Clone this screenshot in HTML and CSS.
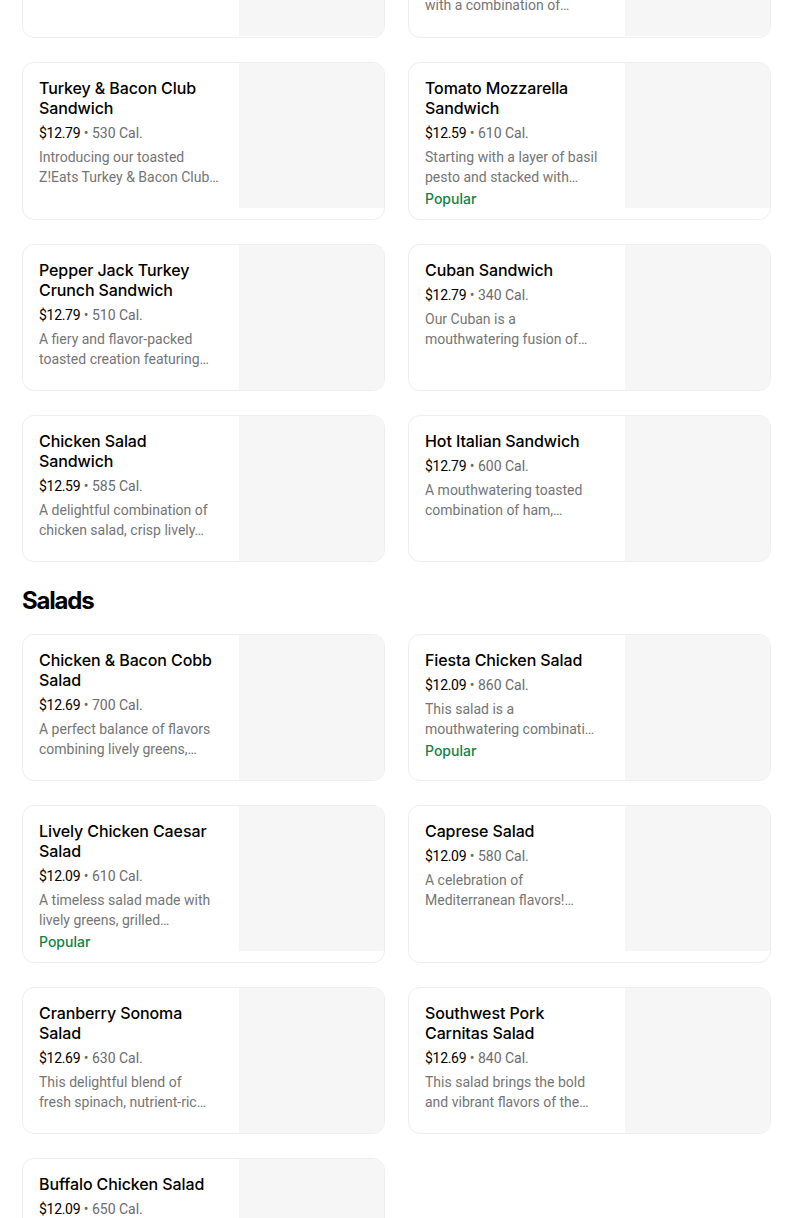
FILE: index.html
```html
<!DOCTYPE html>
<html lang="en">
<head>
<meta charset="utf-8">
<title>Menu</title>
<link rel="stylesheet" href="styles.css">
</head>
<body>
<main class="menu">
  <section class="section">
    <div class="grid grid--cut">
      <article class="card card--cut">
        <div class="card-body">
          <h3 class="card-title">Ham &amp; Swiss Sandwich</h3>
          <p class="card-meta"><span class="price">$12.59</span> • 520 Cal.</p>
          <p class="card-desc"><span class="line">A classic toasted favorite</span><span class="line">layered with smoked ham…</span></p>
        </div>
        <div class="card-media"></div>
      </article>
      <article class="card card--cut">
        <div class="card-body">
          <h3 class="card-title">Italian Meatball<br>Sandwich</h3>
          <p class="card-meta"><span class="price">$12.79</span> • 720 Cal.</p>
          <p class="card-desc"><span class="line">Our toasted sandwich made</span><span class="line">with a combination of…</span></p>
        </div>
        <div class="card-media"></div>
      </article>

      <article class="card">
        <div class="card-body">
          <h3 class="card-title">Turkey &amp; Bacon Club<br>Sandwich</h3>
          <p class="card-meta"><span class="price">$12.79</span> • 530 Cal.</p>
          <p class="card-desc"><span class="line">Introducing our toasted</span><span class="line">Z!Eats Turkey &amp; Bacon Club…</span></p>
        </div>
        <div class="card-media"></div>
      </article>
      <article class="card">
        <div class="card-body">
          <h3 class="card-title">Tomato Mozzarella<br>Sandwich</h3>
          <p class="card-meta"><span class="price">$12.59</span> • 610 Cal.</p>
          <p class="card-desc"><span class="line">Starting with a layer of basil</span><span class="line">pesto and stacked with…</span></p>
          <p class="card-tag">Popular</p>
        </div>
        <div class="card-media"></div>
      </article>

      <article class="card">
        <div class="card-body">
          <h3 class="card-title">Pepper Jack Turkey<br>Crunch Sandwich</h3>
          <p class="card-meta"><span class="price">$12.79</span> • 510 Cal.</p>
          <p class="card-desc"><span class="line">A fiery and flavor-packed</span><span class="line">toasted creation featuring…</span></p>
        </div>
        <div class="card-media"></div>
      </article>
      <article class="card">
        <div class="card-body">
          <h3 class="card-title">Cuban Sandwich</h3>
          <p class="card-meta"><span class="price">$12.79</span> • 340 Cal.</p>
          <p class="card-desc"><span class="line">Our Cuban is a</span><span class="line">mouthwatering fusion of…</span></p>
        </div>
        <div class="card-media"></div>
      </article>

      <article class="card">
        <div class="card-body">
          <h3 class="card-title">Chicken Salad<br>Sandwich</h3>
          <p class="card-meta"><span class="price">$12.59</span> • 585 Cal.</p>
          <p class="card-desc"><span class="line">A delightful combination of</span><span class="line">chicken salad, crisp lively…</span></p>
        </div>
        <div class="card-media"></div>
      </article>
      <article class="card">
        <div class="card-body">
          <h3 class="card-title">Hot Italian Sandwich</h3>
          <p class="card-meta"><span class="price">$12.79</span> • 600 Cal.</p>
          <p class="card-desc"><span class="line">A mouthwatering toasted</span><span class="line">combination of ham,…</span></p>
        </div>
        <div class="card-media"></div>
      </article>
    </div>
  </section>

  <section class="section">
    <h2 class="section-title">Salads</h2>
    <div class="grid">
      <article class="card">
        <div class="card-body">
          <h3 class="card-title">Chicken &amp; Bacon Cobb<br>Salad</h3>
          <p class="card-meta"><span class="price">$12.69</span> • 700 Cal.</p>
          <p class="card-desc"><span class="line">A perfect balance of flavors</span><span class="line">combining lively greens,…</span></p>
        </div>
        <div class="card-media"></div>
      </article>
      <article class="card">
        <div class="card-body">
          <h3 class="card-title">Fiesta Chicken Salad</h3>
          <p class="card-meta"><span class="price">$12.09</span> • 860 Cal.</p>
          <p class="card-desc"><span class="line">This salad is a</span><span class="line">mouthwatering combinati…</span></p>
          <p class="card-tag">Popular</p>
        </div>
        <div class="card-media"></div>
      </article>

      <article class="card">
        <div class="card-body">
          <h3 class="card-title">Lively Chicken Caesar<br>Salad</h3>
          <p class="card-meta"><span class="price">$12.09</span> • 610 Cal.</p>
          <p class="card-desc"><span class="line">A timeless salad made with</span><span class="line">lively greens, grilled…</span></p>
          <p class="card-tag">Popular</p>
        </div>
        <div class="card-media"></div>
      </article>
      <article class="card">
        <div class="card-body">
          <h3 class="card-title">Caprese Salad</h3>
          <p class="card-meta"><span class="price">$12.09</span> • 580 Cal.</p>
          <p class="card-desc"><span class="line">A celebration of</span><span class="line">Mediterranean flavors!…</span></p>
        </div>
        <div class="card-media"></div>
      </article>

      <article class="card">
        <div class="card-body">
          <h3 class="card-title">Cranberry Sonoma<br>Salad</h3>
          <p class="card-meta"><span class="price">$12.69</span> • 630 Cal.</p>
          <p class="card-desc"><span class="line">This delightful blend of</span><span class="line">fresh spinach, nutrient-ric…</span></p>
        </div>
        <div class="card-media"></div>
      </article>
      <article class="card">
        <div class="card-body">
          <h3 class="card-title">Southwest Pork<br>Carnitas Salad</h3>
          <p class="card-meta"><span class="price">$12.69</span> • 840 Cal.</p>
          <p class="card-desc"><span class="line">This salad brings the bold</span><span class="line">and vibrant flavors of the…</span></p>
        </div>
        <div class="card-media"></div>
      </article>

      <article class="card">
        <div class="card-body">
          <h3 class="card-title">Buffalo Chicken Salad</h3>
          <p class="card-meta"><span class="price">$12.09</span> • 650 Cal.</p>
          <p class="card-desc"><span class="line">A bold and zesty salad with</span><span class="line">crispy buffalo chicken…</span></p>
        </div>
        <div class="card-media"></div>
      </article>
    </div>
  </section>
</main>
</body>
</html>
```

FILE: styles.css
```css
* { box-sizing: border-box; }

html, body {
  margin: 0;
  padding: 0;
  background: #ffffff;
}

body {
  font-family: "Inter", "Roboto", "Liberation Sans", sans-serif;
  color: #000000;
  overflow: hidden;
}

.menu {
  width: 772px;
  padding: 0 0 0 22px;
}

.grid {
  display: grid;
  grid-template-columns: 363px 363px;
  column-gap: 23px;
  row-gap: 24px;
}

.grid--cut {
  margin-top: -110px;
}

.section-title {
  margin: 23px 0 17px;
  font-family: "Inter", "Liberation Sans", sans-serif;
  font-size: 24px;
  line-height: 32px;
  font-weight: 700;
  letter-spacing: -1.2px;
}

.card {
  display: flex;
  align-items: flex-start;
  min-height: 147px;
  background: #ffffff;
  border: 1px solid #eeeeee;
  border-radius: 12px;
  overflow: hidden;
}

.card--cut {
  min-height: 148px;
}

.card-body {
  flex: 1 1 auto;
  min-width: 0;
  padding: 15px 16px 10px;
}

.card-media {
  flex: 0 0 145px;
  width: 145px;
  height: 145px;
  background: #f6f6f6;
}

.card-title {
  margin: 0;
  font-family: "Inter", "Roboto", sans-serif;
  font-size: 16px;
  line-height: 20px;
  font-weight: 500;
  color: #000000;
  letter-spacing: -0.1px;
}

.card-meta {
  margin: 5px 0 0;
  font-family: "Roboto", "Liberation Sans", sans-serif;
  font-size: 14px;
  line-height: 20px;
  color: #6b6b6b;
}

.price {
  color: #000000;
  letter-spacing: -0.3px;
}

.card-desc {
  margin: 4px 0 0;
  font-family: "Roboto", "Liberation Sans", sans-serif;
  font-size: 14px;
  line-height: 20px;
  color: #757575;
}

.line {
  display: block;
  white-space: nowrap;
  overflow: hidden;
  text-overflow: ellipsis;
}

.card-tag {
  margin: 2px 0 0;
  font-family: "Inter", "Roboto", sans-serif;
  font-size: 14px;
  line-height: 20px;
  font-weight: 500;
  color: #0e8345;
}
```
